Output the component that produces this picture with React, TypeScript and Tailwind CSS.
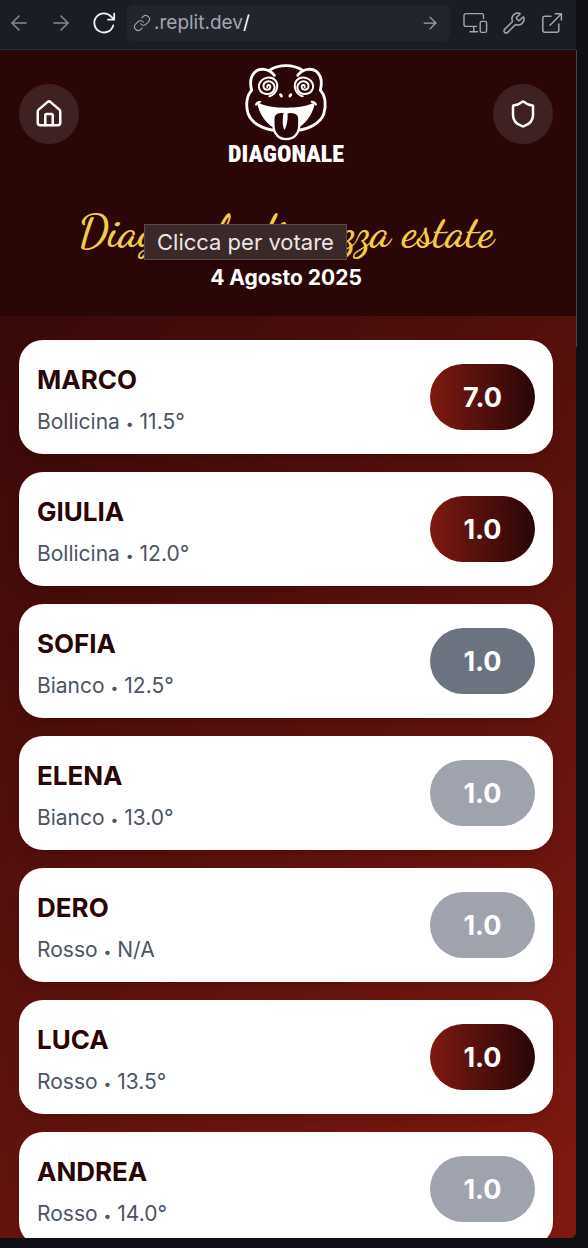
import { ArrowLeft, ArrowRight, House, Link, Shield, Wrench } from "lucide-react";

type Tone = "wine" | "slate" | "muted";

type Entry = {
  name: string;
  kind: string;
  degree: string;
  score: string;
  tone: Tone;
};

const entries: Entry[] = [
  { name: "MARCO", kind: "Bollicina", degree: "11.5°", score: "7.0", tone: "wine" },
  { name: "GIULIA", kind: "Bollicina", degree: "12.0°", score: "1.0", tone: "wine" },
  { name: "SOFIA", kind: "Bianco", degree: "12.5°", score: "1.0", tone: "slate" },
  { name: "ELENA", kind: "Bianco", degree: "13.0°", score: "1.0", tone: "muted" },
  { name: "DERO", kind: "Rosso", degree: "N/A", score: "1.0", tone: "muted" },
  { name: "LUCA", kind: "Rosso", degree: "13.5°", score: "1.0", tone: "wine" },
  { name: "ANDREA", kind: "Rosso", degree: "14.0°", score: "1.0", tone: "muted" },
];

const tones: Record<Tone, string> = {
  wine: "bg-linear-to-r from-[#7f1a10] to-[#2a0607]",
  slate: "bg-[#6b7280]",
  muted: "bg-[#9fa3ae]",
};

function ReloadIcon() {
  return (
    <svg viewBox="0 0 24 24" className="size-6" fill="none" stroke="currentColor" strokeWidth="1.8" strokeLinecap="round" strokeLinejoin="round">
      <path d="M21.2 14.4A9.6 9.6 0 1 1 19.2 5.6L22 8.4" />
      <path d="M22.2 2.6V8.6H16" />
    </svg>
  );
}

function DevicesIcon() {
  return (
    <svg viewBox="0 0 26 24" className="h-6 w-[26px]" fill="none" stroke="currentColor" strokeWidth="1.4" strokeLinecap="round" strokeLinejoin="round">
      <path d="M14.5 15.4H4A2 2 0 0 1 2 13.4V4.6A2 2 0 0 1 4 2.6H19.5A2 2 0 0 1 21.5 4.6V7.5" />
      <path d="M11.8 15.6V20.6M8 20.8H15.5" />
      <rect x="18.2" y="10.4" width="6.4" height="11" rx="1.6" />
    </svg>
  );
}

function OpenIcon() {
  return (
    <svg viewBox="0 0 24 24" className="size-6" fill="none" stroke="currentColor" strokeWidth="1.5" strokeLinecap="round" strokeLinejoin="round">
      <path d="M11 5.2H4.8A2 2 0 0 0 2.8 7.2V19.2A2 2 0 0 0 4.8 21.2H16.8A2 2 0 0 0 18.8 19.2V13" />
      <path d="M15.2 2.8H21.4V9M21.2 3L10 14.2" />
    </svg>
  );
}

function Frog() {
  return (
    <svg viewBox="69 20 258 240" className="h-20 w-[86px]" fill="none" stroke="#fff" strokeWidth="8.5" strokeLinecap="round" strokeLinejoin="round" aria-hidden="true">
      <path d="M150 44C164 35 181 31 198 31S232 35 246 44" />
      <path d="M163 60C147 38 117 36 102 53C90 67 90 86 95 105C80 120 76 150 85 177C95 203 128 221 161 225" />
      <path d="M233 60C249 38 279 36 294 53C306 67 306 86 301 105C316 120 320 150 311 177C301 203 268 221 235 225" />
      <g strokeWidth="6">
        <path d="M142 95C140 88 150 87 151 94C152 105 135 106 131 96C127 81 145 73 157 82C171 94 161 114 144 116C122 117 112 99 119 83C129 65 153 61 166 75C176 87 172 106 162 115C158 119 153 122 148 123" />
        <path d="M254 95C256 88 246 87 245 94C244 105 261 106 265 96C269 81 251 73 239 82C225 94 235 114 252 116C274 117 284 99 277 83C267 65 243 61 230 75C220 87 224 106 234 115C238 119 243 122 248 123" />
        <path d="M108 148C110 142 115 139 121 139M288 148C286 142 281 139 275 139" />
      </g>
      <path stroke="none" fill="#fff" d="M111 140C133 154 166 157 198 157S263 154 285 140C281 170 263 198 240 214H156C133 198 115 170 111 140Z" />
      <path strokeWidth="7" fill="#2a0607" d="M160 190C160 172 182 164 197 174C213 164 238 172 238 190C238 211 239 229 226 241C211 255 186 255 172 241C159 229 160 211 160 190Z" />
      <path fill="#fff" stroke="none" d="M190 176H203C204 196 200 211 194 224C187 214 187 196 190 176Z" />
      <g stroke="none" fill="#fff">
        <ellipse cx="183" cy="120" rx="4.5" ry="7" transform="rotate(-38 183 120)" />
        <ellipse cx="211" cy="120" rx="4.5" ry="7" transform="rotate(38 211 120)" />
      </g>
    </svg>
  );
}

function Toolbar() {
  return (
    <nav aria-label="Browser" className="flex h-[50px] shrink-0 items-center border-b border-[#2b2e38] bg-[#1a1d26] pb-1 pl-[7px] pr-3 text-[#a3a6ae]">
      <button type="button" aria-label="Back" className="mr-[18px] text-[#868a93]"><ArrowLeft size={24} strokeWidth={1.5} /></button>
      <button type="button" aria-label="Forward" className="mr-[19px] text-[#868a93]"><ArrowRight size={24} strokeWidth={1.5} /></button>
      <button type="button" aria-label="Reload" className="mr-[11px] text-[#f2f3f5]"><ReloadIcon /></button>
      <div className="flex h-9 min-w-0 flex-1 items-center rounded-md bg-[#22252e] pl-1.5 pr-2.5">
        <Link size={18} strokeWidth={1.5} className="mr-[3px] shrink-0" />
        <label htmlFor="path" className="pt-0.5 text-[19px]">.replit.dev</label>
        <input id="path" defaultValue="/" className="min-w-0 flex-1 bg-transparent pt-0.5 text-[19px] text-white outline-none" />
        <button type="button" aria-label="Go"><ArrowRight size={20} strokeWidth={1.5} /></button>
      </div>
      <div className="ml-3 flex items-center gap-[14px]">
        <button type="button" aria-label="Devices"><DevicesIcon /></button>
        <button type="button" aria-label="Tools"><Wrench size={24} strokeWidth={1.5} /></button>
        <button type="button" aria-label="Open in new tab"><OpenIcon /></button>
      </div>
    </nav>
  );
}

function Header() {
  const round = "flex size-[60px] items-center justify-center rounded-full bg-[#402121] text-white";
  return (
    <header className="h-[266px] shrink-0 bg-[#2a0607] pl-[19px] pr-[23px] pt-3 text-center text-white">
      <div className="flex items-center justify-between">
        <button type="button" aria-label="Home" className={round}><House size={30} /></button>
        <div className="flex flex-col items-center">
          <Frog />
          <span className="font-['Roboto_Condensed','Liberation_Sans_Narrow',sans-serif] text-2xl font-black leading-6">DIAGONALE</span>
        </div>
        <button type="button" aria-label="Admin" className={round}><Shield size={30} /></button>
      </div>
      <div className="relative mt-9">
        <h1 className="whitespace-nowrap font-['Dancing_Script',cursive] text-[45px] font-semibold leading-[60px] text-[#f3cc45]">Diagonale di mezza estate</h1>
        <div role="tooltip" className="absolute left-[125px] top-[22px] flex h-9 items-center border border-[#5a4a4a] bg-[#3b2929] px-3 text-[22px] text-[#ece6e6] shadow-md">Clicca per votare</div>
      </div>
      <p className="text-[21px] font-bold leading-8">4 Agosto 2025</p>
    </header>
  );
}

function EntryCard({ entry }: { entry: Entry }) {
  return (
    <li className="flex h-[114px] shrink-0 items-center justify-between rounded-3xl bg-white px-[18px] shadow-lg">
      <div className="pt-2">
        <h2 className="text-[26px] font-bold leading-[42px] text-[#2a0607]">{entry.name}</h2>
        <p className="text-[21px] leading-[42px] text-[#4b5563]">
          {entry.kind} <span className="text-sm leading-none">•</span> {entry.degree}
        </p>
      </div>
      <button type="button" aria-label={`Vota ${entry.name}: ${entry.score}`} className={`h-[66px] w-[105px] rounded-full pt-0.5 text-[27px] font-bold text-white ${tones[entry.tone]}`}>
        {entry.score}
      </button>
    </li>
  );
}

export default function App() {
  return (
    <div className="flex h-screen overflow-hidden bg-[#0e1015] pb-2.5 font-['Inter',sans-serif]">
      <div className="flex min-w-0 flex-1 flex-col overflow-hidden rounded-br-md">
        <Toolbar />
        <main className="flex min-h-0 flex-1 flex-col overflow-hidden bg-[linear-gradient(135deg,#2a0607,#801a11)]">
          <Header />
          <ul className="flex flex-col gap-[18px] pl-[19px] pr-[23px] pt-6">
            {entries.map((entry) => (
              <EntryCard key={entry.name} entry={entry} />
            ))}
          </ul>
        </main>
      </div>
      <div className="w-3 shrink-0 pt-[50px]">
        <div className="h-[297px] w-px bg-[#45474c]" />
      </div>
    </div>
  );
}
